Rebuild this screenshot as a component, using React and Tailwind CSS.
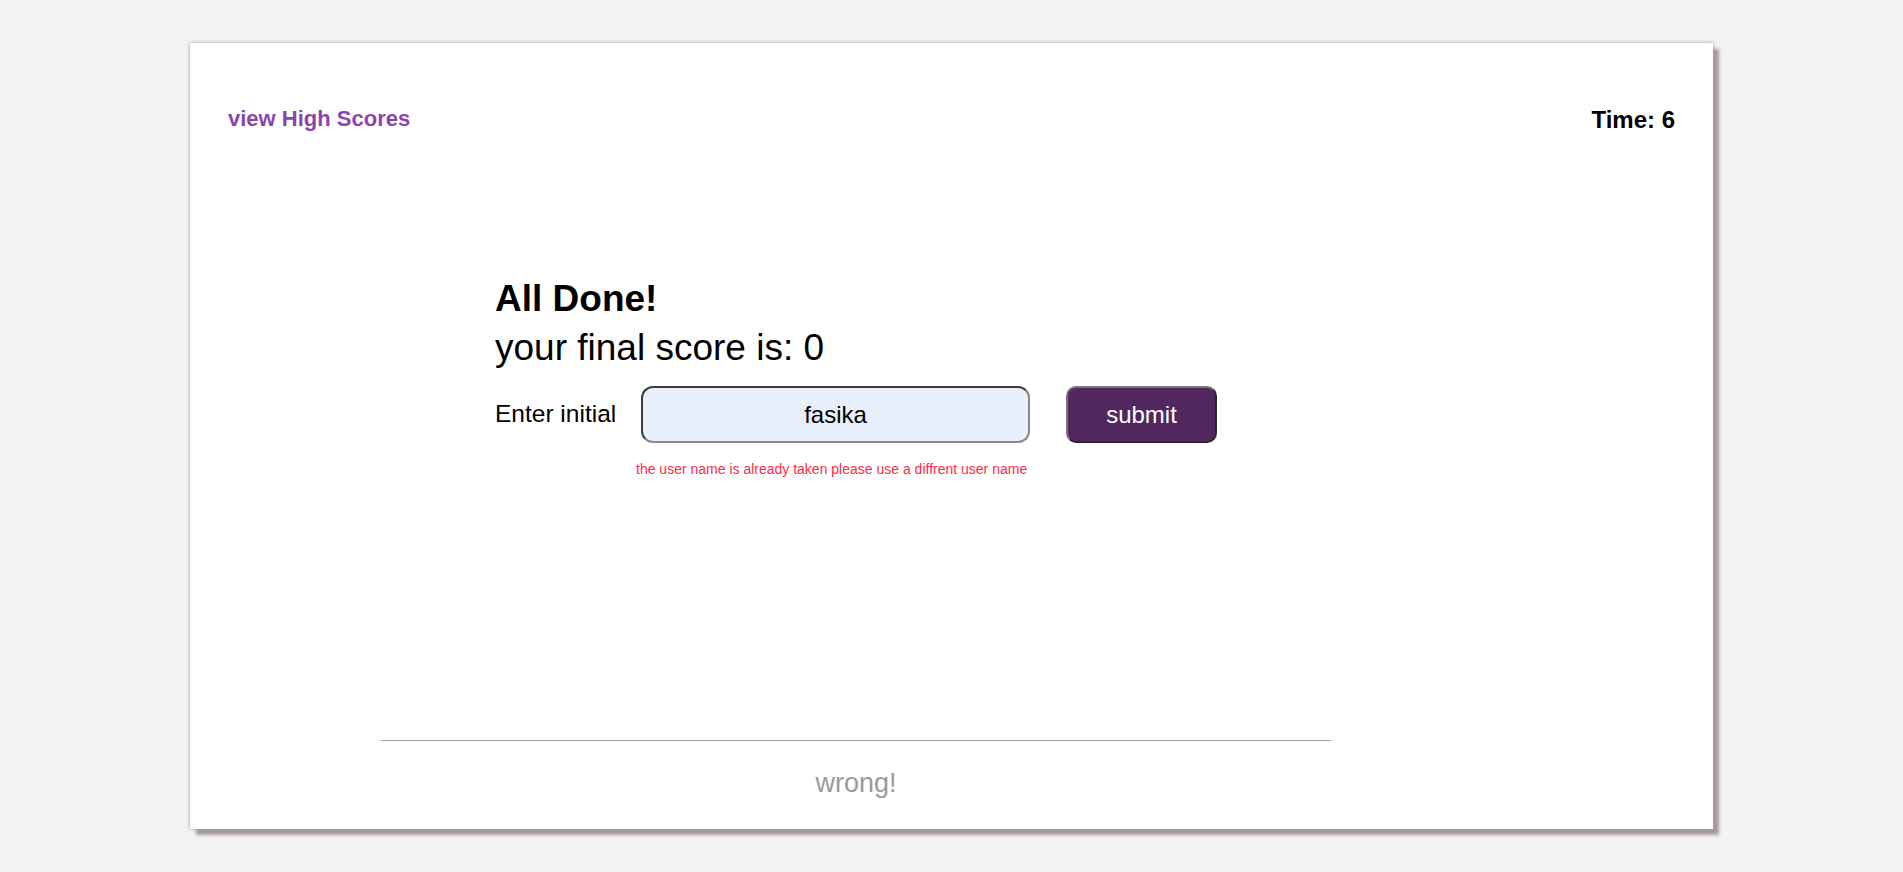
export default function App() {
  return (
    <div className="min-h-screen bg-[#f3f3f3] pt-[43px] pb-[43px] font-['Liberation_Sans',Arial,sans-serif]">
      <div className="ml-[190px] w-[1523px] h-[786px] bg-white shadow-[0_0_4px_#a89a9a,6px_6px_3px_#a89a9a] flex flex-col">
        {/* header */}
        <div className="flex items-center justify-between px-[38px] pt-[61px]">
          <a className="text-[#8e44ad] font-bold text-[22px] leading-[26px] cursor-pointer">view High Scores</a>
          <p className="text-black font-bold text-[24px] leading-[26px] pt-[3px]">Time: 6</p>
        </div>

        {/* result */}
        <div className="pl-[305px] pt-[145px]">
          <h2 className="text-black font-bold text-[37px] leading-[42px]">All Done!</h2>
          <p className="text-black text-[37px] leading-[44px] mt-[6px]">your final score is: 0</p>
          <div className="flex items-center mt-[16px]">
            <label className="text-[24.5px] text-black w-[146px]">Enter initial</label>
            <input
              defaultValue="fasika"
              className="w-[389px] h-[57px] rounded-[12px] bg-[#e8f0fe] border-2 border-[#3d3d3d] border-b-[#8a8a8a] border-r-[#8a8a8a] text-center text-[24px] text-black outline-none"
            />
            <button className="ml-[36px] w-[151px] h-[57px] rounded-[10px] bg-[#52265f] border-2 border-[#2a2a2a] border-t-[#777] border-l-[#777] text-white text-[24px]">
              submit
            </button>
          </div>
          <p className="w-[389px] ml-[141px] mt-[16px] text-center text-[14px] leading-[20px] text-[#ff2a4a] whitespace-nowrap">
            the user name is already taken please use a diffrent user name
          </p>
        </div>

        {/* feedback */}
        <div className="mt-auto mb-[30px] ml-[191px] w-[950px]">
          <div className="border-t border-[#a0a0a0]" />
          <p className="text-center text-[#9a9a9a] text-[27px] leading-[32px] mt-[26px]">wrong!</p>
        </div>
      </div>
    </div>
  );
}
